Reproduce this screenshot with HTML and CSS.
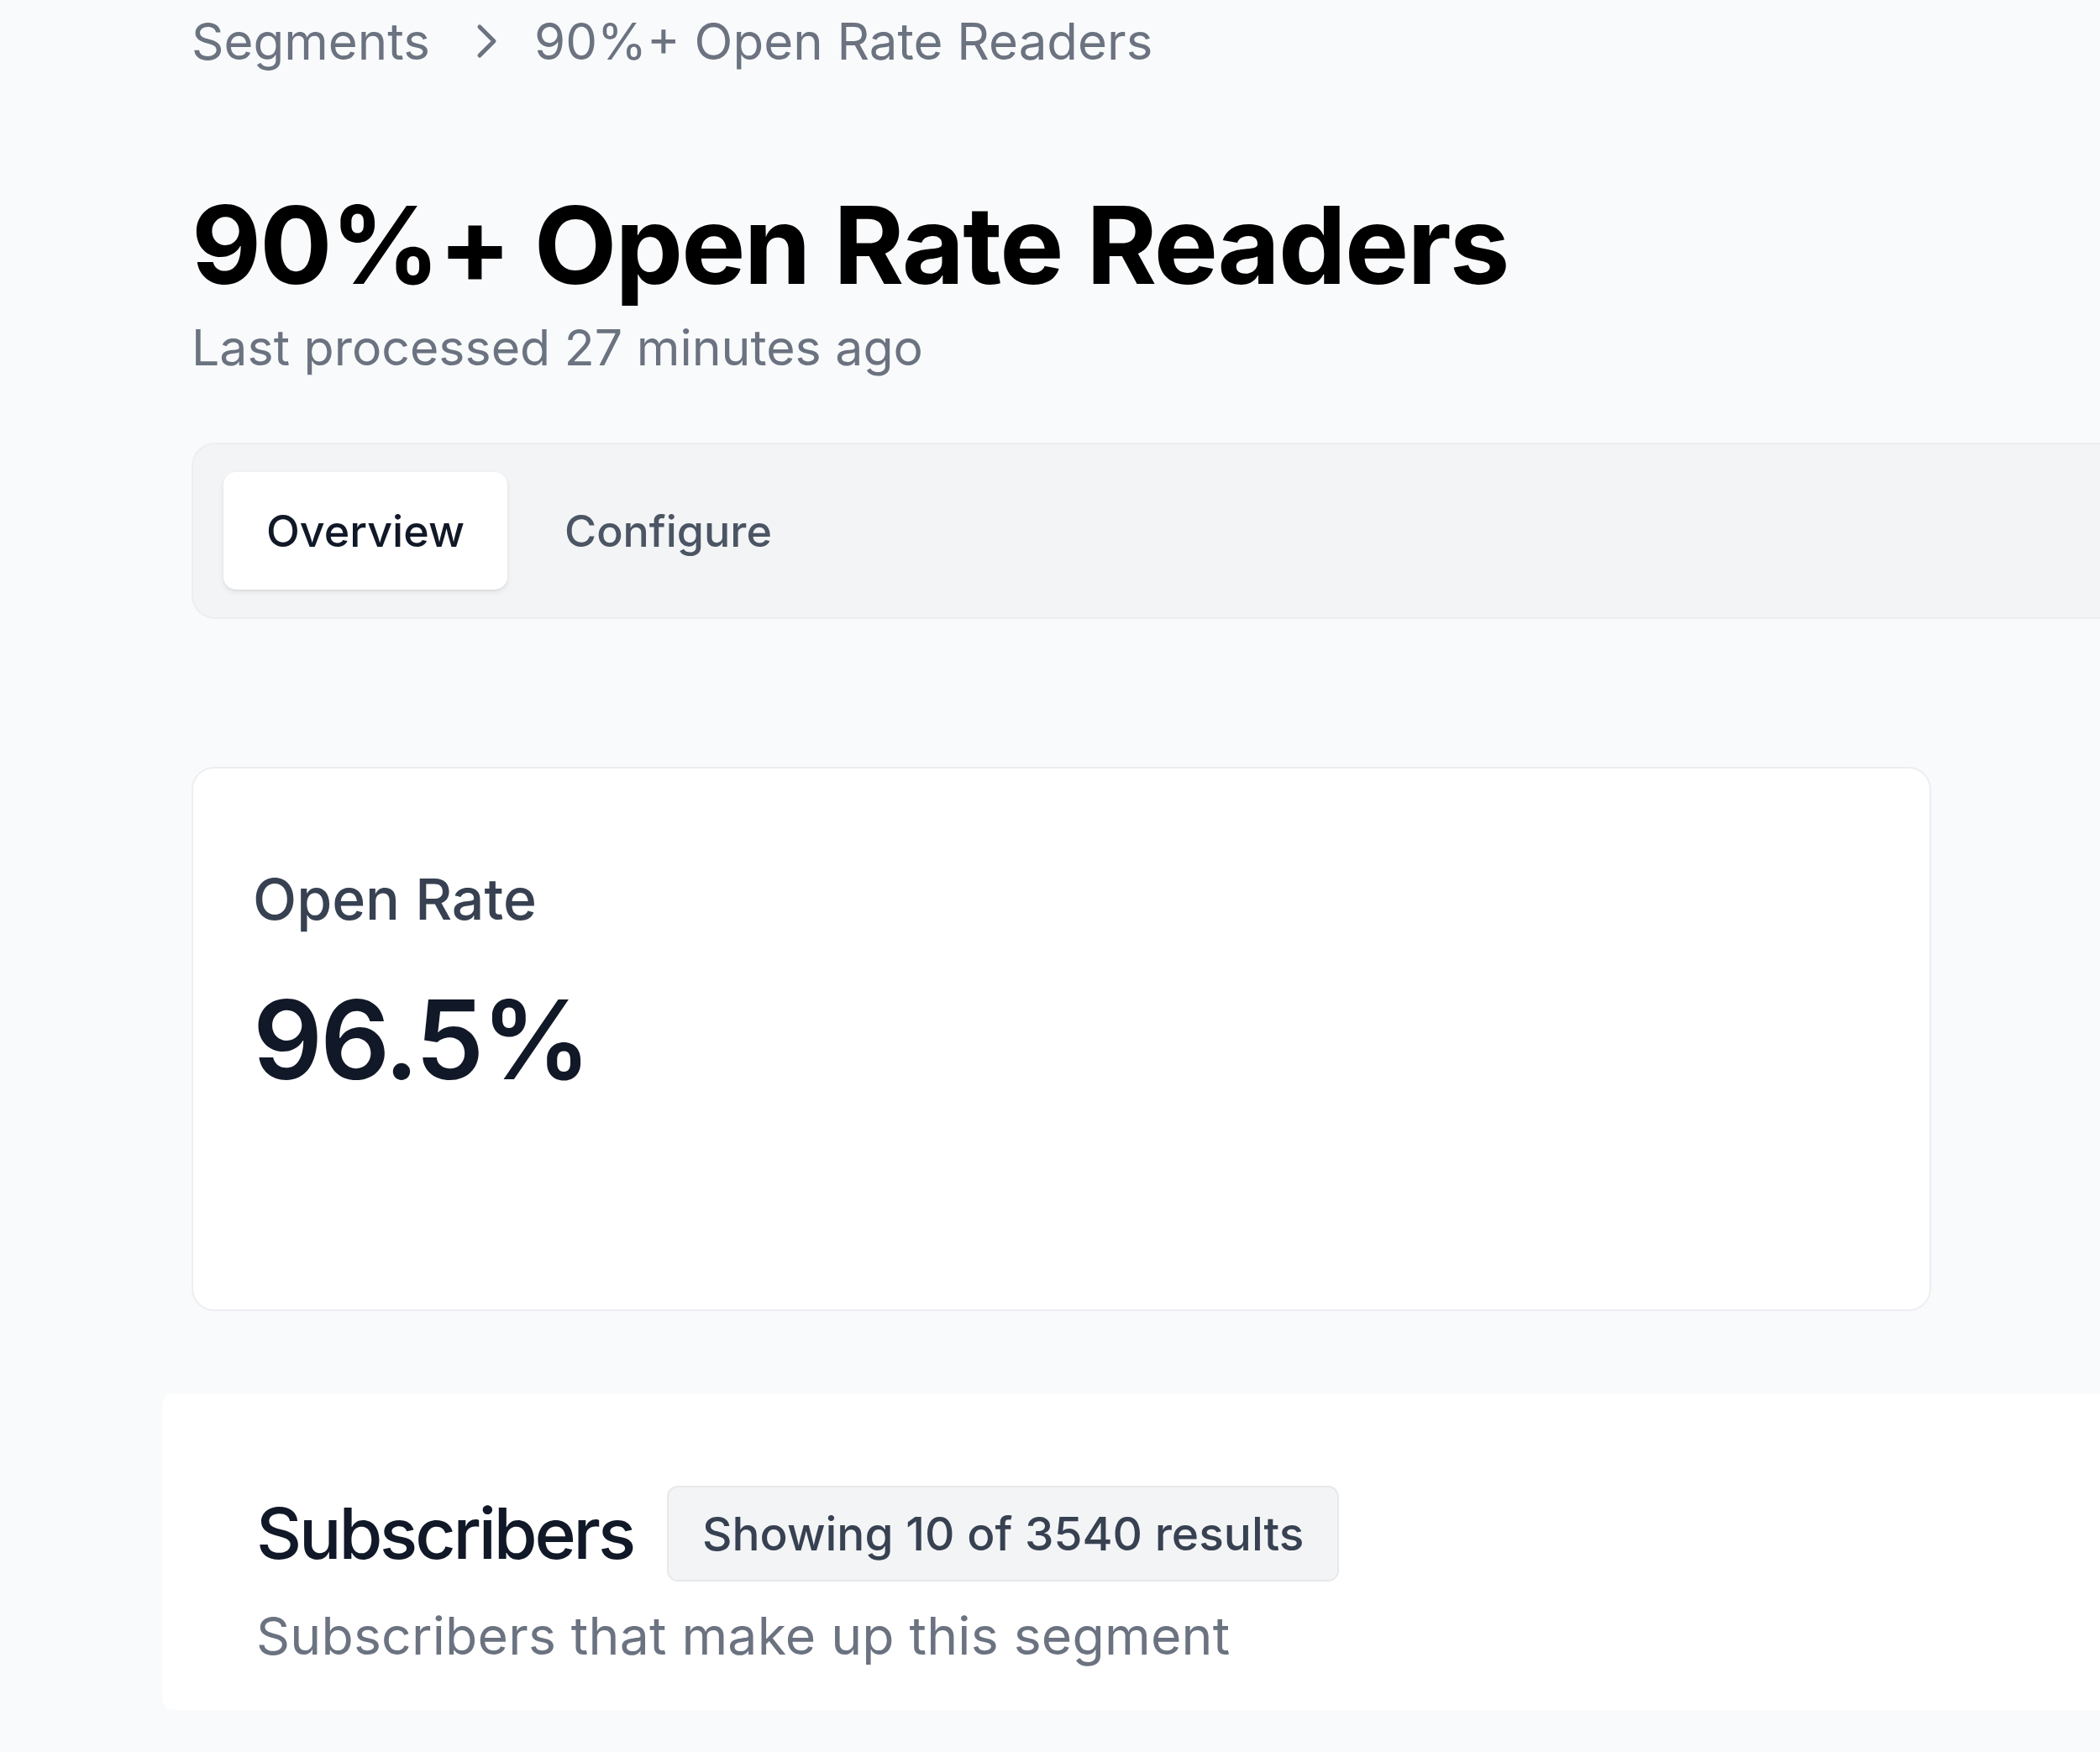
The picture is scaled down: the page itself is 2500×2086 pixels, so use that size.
FILE: index.html
```html
<!DOCTYPE html>
<html lang="en">
<head>
<meta charset="utf-8">
<title>90%+ Open Rate Readers</title>
<link rel="stylesheet" href="styles.css">
</head>
<body>
<div class="page">
  <nav class="breadcrumb">
    <span class="crumb">Segments</span>
    <svg class="chev" viewBox="0 0 25 42" width="25" height="42" aria-hidden="true"><path d="M4 4 L21 21 L4 38" fill="none" stroke="#6b7280" stroke-width="5" stroke-linecap="round" stroke-linejoin="round"/></svg>
    <span class="crumb">90%+ Open Rate Readers</span>
  </nav>

  <header class="head">
    <h1 class="title">90%+ Open Rate Readers</h1>
    <p class="subtitle">Last processed 27 minutes ago</p>
  </header>

  <div class="tabs">
    <div class="tab active">Overview</div>
    <div class="tab">Configure</div>
  </div>

  <section class="card">
    <div class="card-label">Open Rate</div>
    <div class="card-value">96.5%</div>
  </section>

  <section class="panel">
    <div class="panel-head">
      <h2 class="panel-title">Subscribers</h2>
      <span class="badge">Showing 10 of 3540 results</span>
    </div>
    <p class="panel-desc">Subscribers that make up this segment</p>
  </section>
</div>
</body>
</html>
```

FILE: styles.css
```css
* { box-sizing: border-box; }
html, body {
  margin: 0;
  padding: 0;
  background: #f9fafb;
  overflow: hidden;
}
body {
  font-family: Inter, "Noto Sans", "Liberation Sans", sans-serif;
  color: #111827;
  width: 2500px;
  height: 2086px;
}
.page {
  padding: 5px 0 0 228px;
}
.breadcrumb {
  display: flex;
  align-items: center;
  font-size: 60px;
  line-height: 88px;
  color: #6b7280;
}
.chev {
  display: block;
  margin: 0 44px 0 55px;
}
.head {
  margin-top: 122px;
}
.title {
  margin: 0;
  font-size: 128px;
  line-height: 154px;
  font-weight: 700;
  color: #000;
  letter-spacing: -1.8px;
}
.subtitle {
  margin: 3px 0 0;
  font-size: 59px;
  line-height: 83px;
  color: #6b7280;
}
.tabs {
  margin-top: 72px;
  margin-right: -200px;
  height: 210px;
  background: #f3f4f6;
  border: 2px solid #eceef1;
  border-right: none;
  border-radius: 28px 0 0 28px;
  padding: 33px 36px;
  display: flex;
  align-items: stretch;
  gap: 17px;
}
.tab {
  display: flex;
  align-items: center;
  padding: 0 51px;
  font-size: 52px;
  font-weight: 500;
  color: #4b5563;
  border-radius: 15px;
}
.tab.active {
  background: #fff;
  color: #111827;
  box-shadow: 0 3px 6px rgba(0, 0, 0, 0.08), 0 1px 2px rgba(0, 0, 0, 0.06);
}
.card {
  margin-top: 176px;
  width: 2071px;
  height: 648px;
  background: #fff;
  border: 2px solid #eceef1;
  border-radius: 27px;
  padding: 108px 71px 0;
}
.card-label {
  font-size: 68px;
  line-height: 95px;
  font-weight: 500;
  color: #374151;
}
.card-value {
  margin-top: 42px;
  font-size: 130px;
  line-height: 156px;
  font-weight: 600;
  color: #111827;
  letter-spacing: -3px;
}
.panel {
  margin: 98px -200px 0 -35px;
  height: 377px;
  background: #fff;
  border-radius: 14px 0 0 14px;
  padding: 110px 0 0 112px;
}
.panel-head {
  display: flex;
  align-items: center;
  gap: 40px;
}
.panel-title {
  margin: 0;
  font-size: 84px;
  line-height: 110px;
  font-weight: 500;
  color: #111827;
  letter-spacing: -3.2px;
}
.badge {
  display: inline-flex;
  align-items: center;
  height: 114px;
  padding: 0 40px;
  background: #f3f4f6;
  border: 2px solid #e7e8eb;
  border-radius: 13px;
  font-size: 55px;
  font-weight: 500;
  color: #374151;
}
.panel-desc {
  margin: 18px 0 0;
  font-size: 62.5px;
  line-height: 93px;
  color: #6b7280;
  letter-spacing: 0.2px;
}
```
